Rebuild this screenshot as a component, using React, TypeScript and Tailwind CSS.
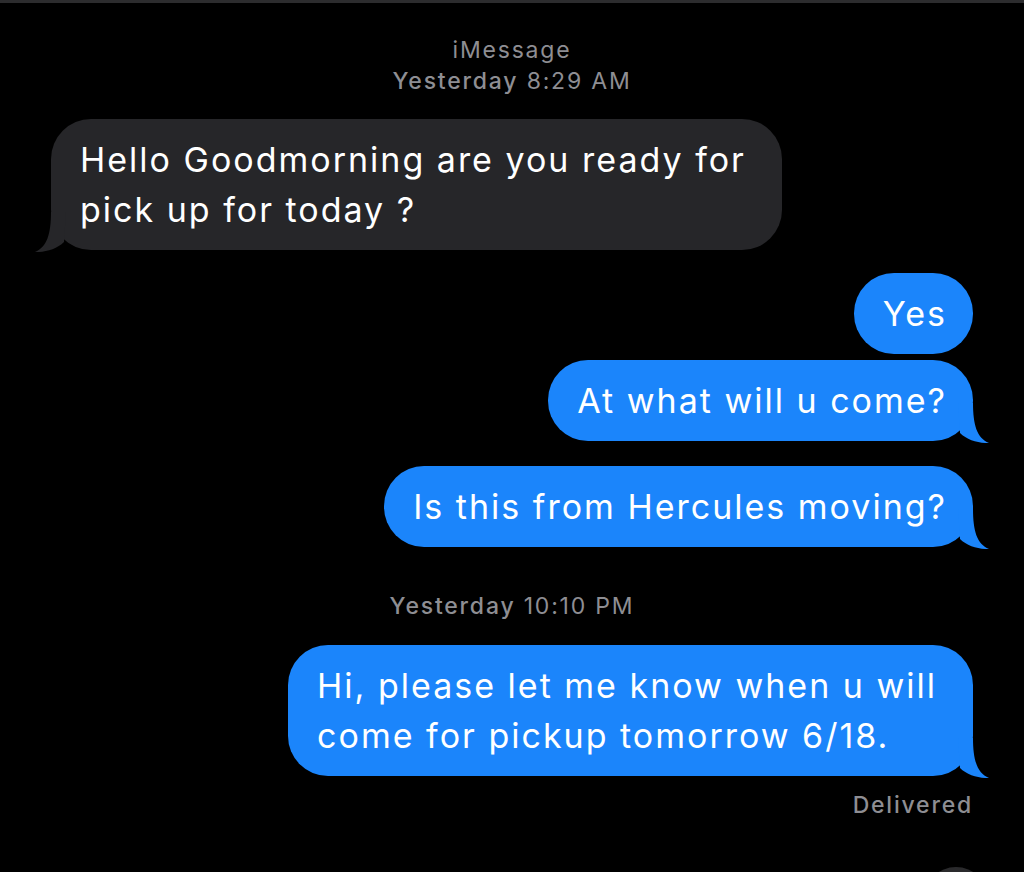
import { type ReactNode } from 'react';

const FONT = "font-['Inter','Noto_Sans',sans-serif]";

function Tail({ side, color }: { side: 'left' | 'right'; color: string }) {
  const pos = side === 'right' ? 'right-[-17px]' : 'left-[-17px] -scale-x-100';
  return (
    <svg
      className={`absolute bottom-[-2px] ${pos}`}
      width="32"
      height="40"
      viewBox="0 0 32 40"
    >
      <path d="M0 0 H15 C15 22 19 35 31 40 C21 40.5 9 37 2 30 L0 0 Z" fill={color} />
    </svg>
  );
}

interface BubbleProps {
  children: ReactNode;
  sent?: boolean;
  tail?: boolean;
  wrapped?: boolean;
}

function Bubble({ children, sent = false, tail = false, wrapped = false }: BubbleProps) {
  const color = sent ? '#1b85fb' : '#262629';
  return (
    <div className={`flex ${sent ? 'justify-end' : 'justify-start'}`}>
      <div
        className={`relative rounded-[40px] py-[15.5px] pl-[29px] text-[34px] leading-[50px] tracking-[2px] text-white whitespace-nowrap ${
          wrapped ? 'pr-[36px]' : 'pr-[26px]'
        } ${sent ? 'bg-[#1b85fb]' : 'bg-[#262629]'}`}
      >
        {tail && <Tail side={sent ? 'right' : 'left'} color={color} />}
        <span className="relative">{children}</span>
      </div>
    </div>
  );
}

function Stamp({ day, time }: { day: string; time: string }) {
  return (
    <div className="text-center text-[23px] leading-[30px] tracking-[1.8px] text-[#8e8e93]">
      <span className="font-medium">{day}</span> {time}
    </div>
  );
}

export default function App() {
  return (
    <div className={`h-[872px] w-[1024px] overflow-hidden bg-black ${FONT}`}>
      <div className="h-[3px] bg-[#2c2c2e]" />
      <div className="flex flex-col px-[51px] pt-[32px]">
        <div className="text-center text-[23px] leading-[30px] tracking-[1.8px] text-[#8e8e93]">
          iMessage
        </div>
        <div className="mt-[1px]">
          <Stamp day="Yesterday" time="8:29 AM" />
        </div>

        <div className="mt-[23px]">
          <Bubble tail wrapped>
            Hello Goodmorning are you ready for
            <br />
            pick up for today ?
          </Bubble>
        </div>

        <div className="mt-[23px]">
          <Bubble sent>Yes</Bubble>
        </div>
        <div className="mt-[6px]">
          <Bubble sent tail>
            At what will u come?
          </Bubble>
        </div>
        <div className="mt-[25px]">
          <Bubble sent tail>
            Is this from Hercules moving?
          </Bubble>
        </div>

        <div className="mt-[44px]">
          <Stamp day="Yesterday" time="10:10 PM" />
        </div>

        <div className="mt-[24px]">
          <Bubble sent tail wrapped>
            Hi, please let me know when u will
            <br />
            come for pickup tomorrow 6/18.
          </Bubble>
        </div>

        <div className="mt-[14px] text-right text-[23px] font-medium leading-[30px] tracking-[1.8px] text-[#8e8e93]">
          Delivered
        </div>

        <div className="mt-[47px] mr-[-15px] flex justify-end">
          <div className="h-[64px] w-[64px] rounded-full bg-[#2a2a2c]" />
        </div>
      </div>
    </div>
  );
}
